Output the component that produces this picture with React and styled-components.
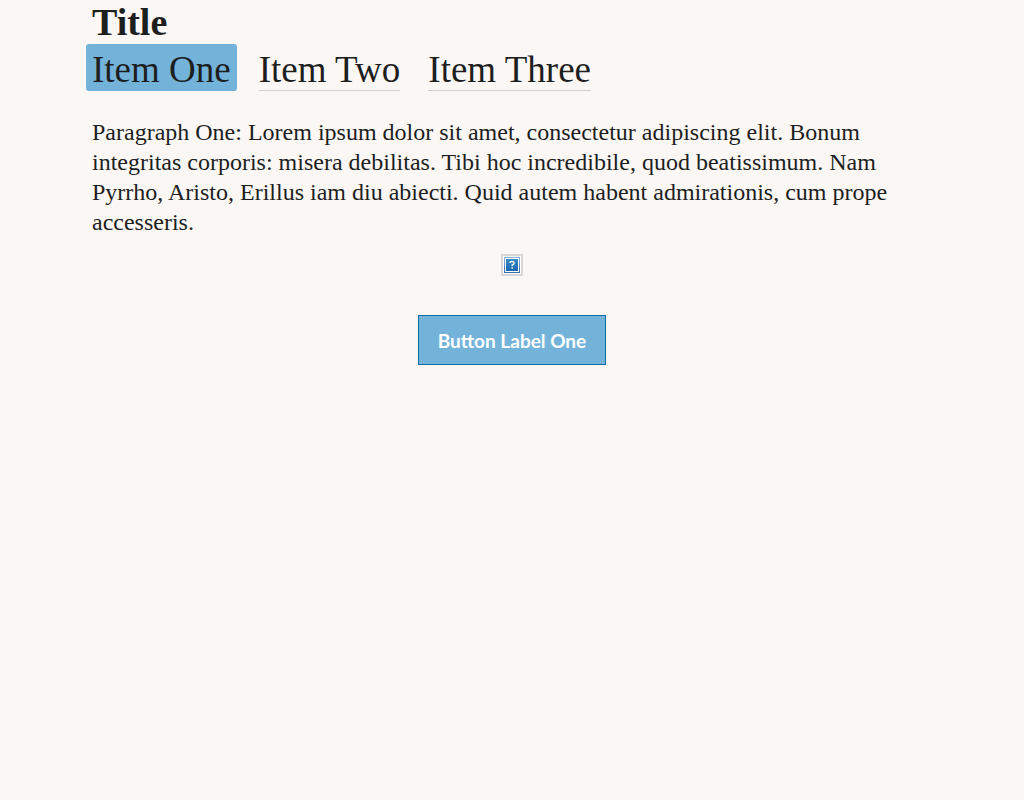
import React from "react";
import styled, { createGlobalStyle } from "styled-components";

const GlobalStyle = createGlobalStyle`
  * { box-sizing: border-box; }
  body {
    margin: 0;
    background: #fbf7f4;
    color: #1d1e1e;
    font-family: "Liberation Serif", "Times New Roman", serif;
  }
`;

const Page = styled.main`
  max-width: 888px;
  margin: 0 auto;
  padding: 0 24px;
`;

const Title = styled.h1`
  margin: 0;
  font-size: 38px;
  line-height: 44px;
  font-weight: 700;
`;

const Nav = styled.nav`
  display: flex;
  flex-wrap: wrap;
  gap: 28px;
`;

const NavLink = styled.a`
  height: 47px;
  margin: ${(p) => (p.$active ? "0 -6px" : "0")};
  padding: ${(p) => (p.$active ? "0 6px" : "0")};
  border-bottom: 1px solid ${(p) => (p.$active ? "#73b3da" : "#d0cfce")};
  border-radius: ${(p) => (p.$active ? "3px" : "0")};
  background: ${(p) => (p.$active ? "#73b3da" : "transparent")};
  color: inherit;
  font-size: 37px;
  line-height: 52px;
  text-decoration: none;
`;

const Paragraph = styled.p`
  margin: 26px 0 17px;
  font-size: 24px;
  line-height: 30px;
`;

const Figure = styled.div`
  display: flex;
  justify-content: center;
`;

const Actions = styled.div`
  display: flex;
  justify-content: center;
  margin-top: 39px;
`;

const Button = styled.button`
  height: 50px;
  padding: 0 19px;
  border: 1px solid #0b70a8;
  background: #73b3da;
  color: #fff;
  font-family: Lato, sans-serif;
  font-size: 19px;
  font-weight: 700;
  cursor: pointer;
`;

function MissingImage() {
  return (
    <svg width="22" height="22" viewBox="0 0 22 22" role="img" aria-label="Missing image">
      <defs>
        <linearGradient id="tile" x1="0" y1="0" x2="0" y2="1">
          <stop offset="0" stopColor="#3a8ac6" />
          <stop offset="1" stopColor="#1c65ae" />
        </linearGradient>
        <linearGradient id="frame" x1="0" y1="0" x2="0" y2="1">
          <stop offset="0" stopColor="#8fb0d8" />
          <stop offset="1" stopColor="#3d70ae" />
        </linearGradient>
      </defs>
      <rect x="1" y="1" width="20" height="20" fill="#fff" stroke="#dad6d4" strokeWidth="2" />
      <rect x="3.5" y="3.5" width="15" height="15" fill="#fff" stroke="url(#frame)" />
      <rect x="5" y="5" width="12" height="12" fill="url(#tile)" />
      <path d="M9 9V8.5Q9 7.5 11 7.5T13 9.2Q13 10.3 11.2 11V12.3M11.2 13.3V14.8" fill="none" stroke="#e7f1fa" strokeWidth="1.5" />
    </svg>
  );
}

const items = ["Item One", "Item Two", "Item Three"];

export default function App() {
  return (
    <>
      <GlobalStyle />
      <Page>
        <Title>Title</Title>
        <Nav>
          {items.map((item, i) => (
            <NavLink key={item} href="#" $active={i === 0} aria-current={i === 0 ? "page" : undefined}>
              {item}
            </NavLink>
          ))}
        </Nav>
        <Paragraph>
          Paragraph One: Lorem ipsum dolor sit amet, consectetur adipiscing elit. Bonum integritas
          corporis: misera debilitas. Tibi hoc incredibile, quod beatissimum. Nam Pyrrho, Aristo,
          Erillus iam diu abiecti. Quid autem habent admirationis, cum prope accesseris.
        </Paragraph>
        <Figure>
          <MissingImage />
        </Figure>
        <Actions>
          <Button type="button">Button Label One</Button>
        </Actions>
      </Page>
    </>
  );
}
